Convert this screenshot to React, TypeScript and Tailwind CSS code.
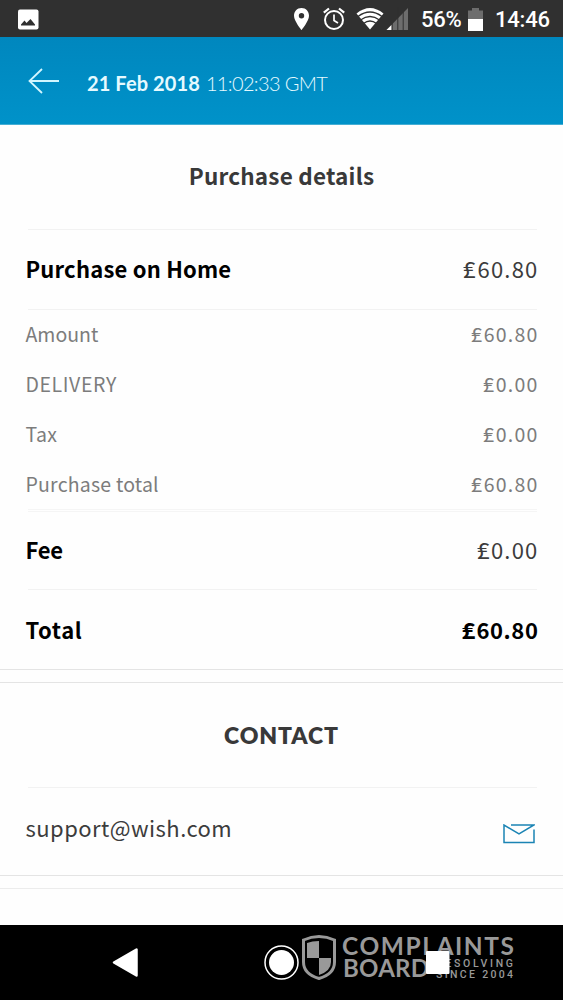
import React from 'react';

interface AmountRow {
  label: string;
  value: string;
  labelClass: string;
}

const amounts: AmountRow[] = [
  { label: 'Amount', value: '60.80', labelClass: 'tracking-[0px]' },
  { label: 'DELIVERY', value: '0.00', labelClass: 'tracking-[0.6px]' },
  { label: 'Tax', value: '0.00', labelClass: 'tracking-[0.3px]' },
  { label: 'Purchase total', value: '60.80', labelClass: 'tracking-[0.2px]' },
];

function StatusBar() {
  return (
    <div className="h-[37px] shrink-0 bg-[#303030] flex items-center justify-between pl-[18px] pr-[13px] text-white">
      <svg className="mt-[1px]" width="21" height="21" viewBox="0 0 21 21">
        <rect x="0" y="0.5" width="20.5" height="20" rx="2" fill="#fff" />
        <path d="M3 16.5 V15.5 L6.5 11.5 L8.5 14 L12.5 10 L17 15.5 V16.5 Z" fill="#303030" />
      </svg>
      <div className="flex items-center">
        <svg width="115" height="24" viewBox="0 0 115 24" className="mt-[1px]">
          {/* Location pin */}
          <path
            d="M8.5 1 C4 1 1 4.5 1 8.7 C1 14 8.5 23 8.5 23 C8.5 23 16 14 16 8.7 C16 4.5 13 1 8.5 1 Z M8.5 6 A2.7 2.7 0 1 1 8.5 11.4 A2.7 2.7 0 1 1 8.5 6 Z"
            fill="#fff"
            fillRule="evenodd"
          />
          {/* Alarm */}
          <g fill="none" stroke="#fff" strokeWidth="2">
            <circle cx="41" cy="13" r="9" />
            <path d="M41 7.5 V13.5 L45 16" strokeWidth="1.7" />
            <path d="M30.8 5.7 L36 1.5 M46 1.5 L51.2 5.7" strokeWidth="2.2" />
          </g>
          {/* Wifi */}
          <path d="M63.5 6.5 Q77 -4.5 90.5 6.5 L77 22.5 Z" fill="#fff" />
          <g fill="none" stroke="#303030" strokeWidth="1.3">
            <path d="M65 9.5 Q77 0.5 89 9.5" />
            <path d="M67.5 13 Q77 6 86.5 13" />
            <path d="M70.5 16.5 Q77 11.5 83.5 16.5" />
          </g>
          {/* Signal */}
          <path d="M93.5 23 L115 1 V23 Z" fill="#6d6d6d" />
          <path d="M93.5 23 L98.5 18 V23 Z" fill="#fff" />
          <path d="M99.2 0 V23 M104.8 0 V23 M110.2 0 V23" stroke="#303030" strokeWidth="1" />
        </svg>
        <span className="ml-[13px] w-[41px] whitespace-nowrap font-['Roboto',sans-serif] text-[22px] leading-none font-medium tracking-[-0.3px] mt-[2px]">
          56%
        </span>
        <svg width="15" height="23" viewBox="0 0 15 23" className="ml-[6px] mt-[1px]">
          <path d="M0 2.5 H4 V0 H11 V2.5 H15 V11 H0 Z" fill="#6d6d6d" />
          <rect y="11" width="15" height="12" fill="#fff" />
        </svg>
        <span className="ml-[12px] w-[55px] whitespace-nowrap font-['Roboto',sans-serif] text-[22px] leading-none font-medium tracking-[-0.2px] mt-[2px]">
          14:46
        </span>
      </div>
    </div>
  );
}

function Header() {
  return (
    <div className="h-[88px] shrink-0 bg-linear-to-b from-[#0087be] to-[#0092c9] flex items-center pl-[28px] text-[#e6faff] border-b border-[#45aed4]">
      <svg width="32" height="26" viewBox="0 0 32 26" fill="none" stroke="#d2f6ff" strokeWidth="1.8">
        <path d="M31 13 H1.5 M14 1 L1.5 13 L14 25" />
      </svg>
      <div className="ml-[27px] mt-[4px] font-['Lato',sans-serif] text-[20px] leading-none whitespace-nowrap">
        <span className="font-bold tracking-[0.1px]">21 Feb 2018</span>
        <span className="ml-[6px] font-light tracking-[-0.65px]">11:02:33 GMT</span>
      </div>
    </div>
  );
}

function Divider() {
  return <div className="h-px ml-[28px] mr-[26px] bg-[#f2f2f2]" />;
}

// Pound sign with a second crossbar, set a bit wider than the digits
function Price({ value, bold = false }: { value: string; bold?: boolean }) {
  return (
    <span className={`-mr-[1px] whitespace-nowrap ${bold ? 'tracking-[0.6px]' : 'tracking-[1.2px]'}`}>
      <span className="relative inline-block leading-none origin-right scale-x-[1.12] after:absolute after:left-[0.04em] after:right-[0.18em] after:top-[0.46em] after:h-px after:bg-current after:content-['']">
        £
      </span>
      {value}
    </span>
  );
}

function MailIcon() {
  return (
    <svg width="32" height="20" viewBox="0 0 32 20" fill="none" stroke="#1b84b4" strokeWidth="1.5">
      <path d="M8 1 H31 L16 9.8 L1 1 V18.5 H31 V5.5" />
    </svg>
  );
}

function NavBar() {
  return (
    <div className="h-[75px] shrink-0 bg-black">
      <svg width="563" height="75" viewBox="0 0 563 75">
        <path d="M114 37.5 L136.5 24.5 V50.5 Z" fill="#fff" stroke="#fff" strokeWidth="2.5" strokeLinejoin="round" />
        <circle cx="281.5" cy="37.5" r="16.5" fill="none" stroke="#fff" strokeWidth="1.5" />
        <circle cx="281.5" cy="37.5" r="12.5" fill="#fff" />
        {/* Watermark */}
        <path
          d="M303.5 15 Q319 8 334.5 15 V37 Q334.5 49 319 53.5 Q303.5 49 303.5 37 Z"
          fill="#000"
          stroke="#999"
          strokeWidth="3"
        />
        <path d="M319 16 V33 H307 V18 Q312 16 319 16 Z M319 33 H331 V37 Q331 46 319 50 Z" fill="#999" />
        <g fill="#999" fontFamily="Lato, sans-serif" fontWeight="700">
          <text x="342" y="29.7" fontSize="24.5" textLength="172" lengthAdjust="spacing">COMPLAINTS</text>
          <text x="343" y="52" fontSize="24" textLength="86" lengthAdjust="spacing">BOARD</text>
        </g>
        <g fill="#999" fontFamily="Roboto, sans-serif" fontSize="10.5" fontWeight="500">
          <text x="436" y="42" textLength="77" lengthAdjust="spacing">RESOLVING</text>
          <text x="436" y="52.5" textLength="77" lengthAdjust="spacing">SINCE 2004</text>
        </g>
        <rect x="426" y="26" width="23.5" height="23" rx="1" fill="#fff" />
      </svg>
    </div>
  );
}

export default function App() {
  return (
    <div className="w-[563px] h-[1000px] overflow-hidden flex flex-col bg-[#fefefe] font-['Noto_Sans_CJK_SC','Noto_Sans',sans-serif]">
      <StatusBar />
      <Header />

      <div className="h-[800px] flex flex-col">
        {/* Purchase details */}
        <div className="h-[545px] border-b border-[#e4e4e4]">
          <h2 className="h-[104px] pb-[4px] flex items-center justify-center text-[22.5px] leading-none font-bold tracking-[0.2px] text-[#393939]">
            Purchase details
          </h2>
          <Divider />
          <div className="h-[79px] pb-[4px] px-[25.5px] flex items-center justify-between text-[22px] leading-none">
            <span className="font-bold tracking-[0.2px] text-black">Purchase on Home</span>
            <span className="text-[#3c3c3c]"><Price value="60.80" /></span>
          </div>
          <Divider />
          <div className="h-[199px] px-[25.5px] text-[19.5px] leading-[48px] text-[#7c7c7c]">
            {amounts.map((row) => (
              <div key={row.label} className="h-[50px] flex justify-between">
                <span className={row.labelClass}>{row.label}</span>
                <Price value={row.value} />
              </div>
            ))}
          </div>
          <div className="h-[3px] ml-[28px] mr-[26px] border-y border-[#f5f5f5]" />
          <div className="h-[77px] pb-[4px] px-[25.5px] flex items-center justify-between text-[22px] leading-none">
            <span className="font-bold tracking-[-0.3px] text-black">Fee</span>
            <span className="text-[#3c3c3c]"><Price value="0.00" /></span>
          </div>
          <Divider />
          <div className="h-[79px] pb-[2px] px-[25.5px] flex items-center justify-between text-[22px] leading-none font-bold text-black">
            <span className="tracking-[0.6px]">Total</span>
            <Price value="60.80" bold />
          </div>
        </div>

        {/* Contact */}
        <div className="mt-[12px] h-[194px] border-y border-[#e4e4e4]">
          <h2 className="h-[104px] flex items-center justify-center font-['Lato',sans-serif] text-[23px] leading-none font-extrabold tracking-[0.9px] text-[#393939]">
            CONTACT
          </h2>
          <Divider />
          <div className="h-[87px] pl-[25.5px] pr-[28px] flex items-center justify-between">
            <span className="pb-[10px] text-[22px] leading-none tracking-[0.45px] text-[#3c3c3c]">support@wish.com</span>
            <span className="pt-[5px]"><MailIcon /></span>
          </div>
        </div>
        <div className="mt-[12px] h-px bg-[#ececec]" />
      </div>

      <NavBar />
    </div>
  );
}
